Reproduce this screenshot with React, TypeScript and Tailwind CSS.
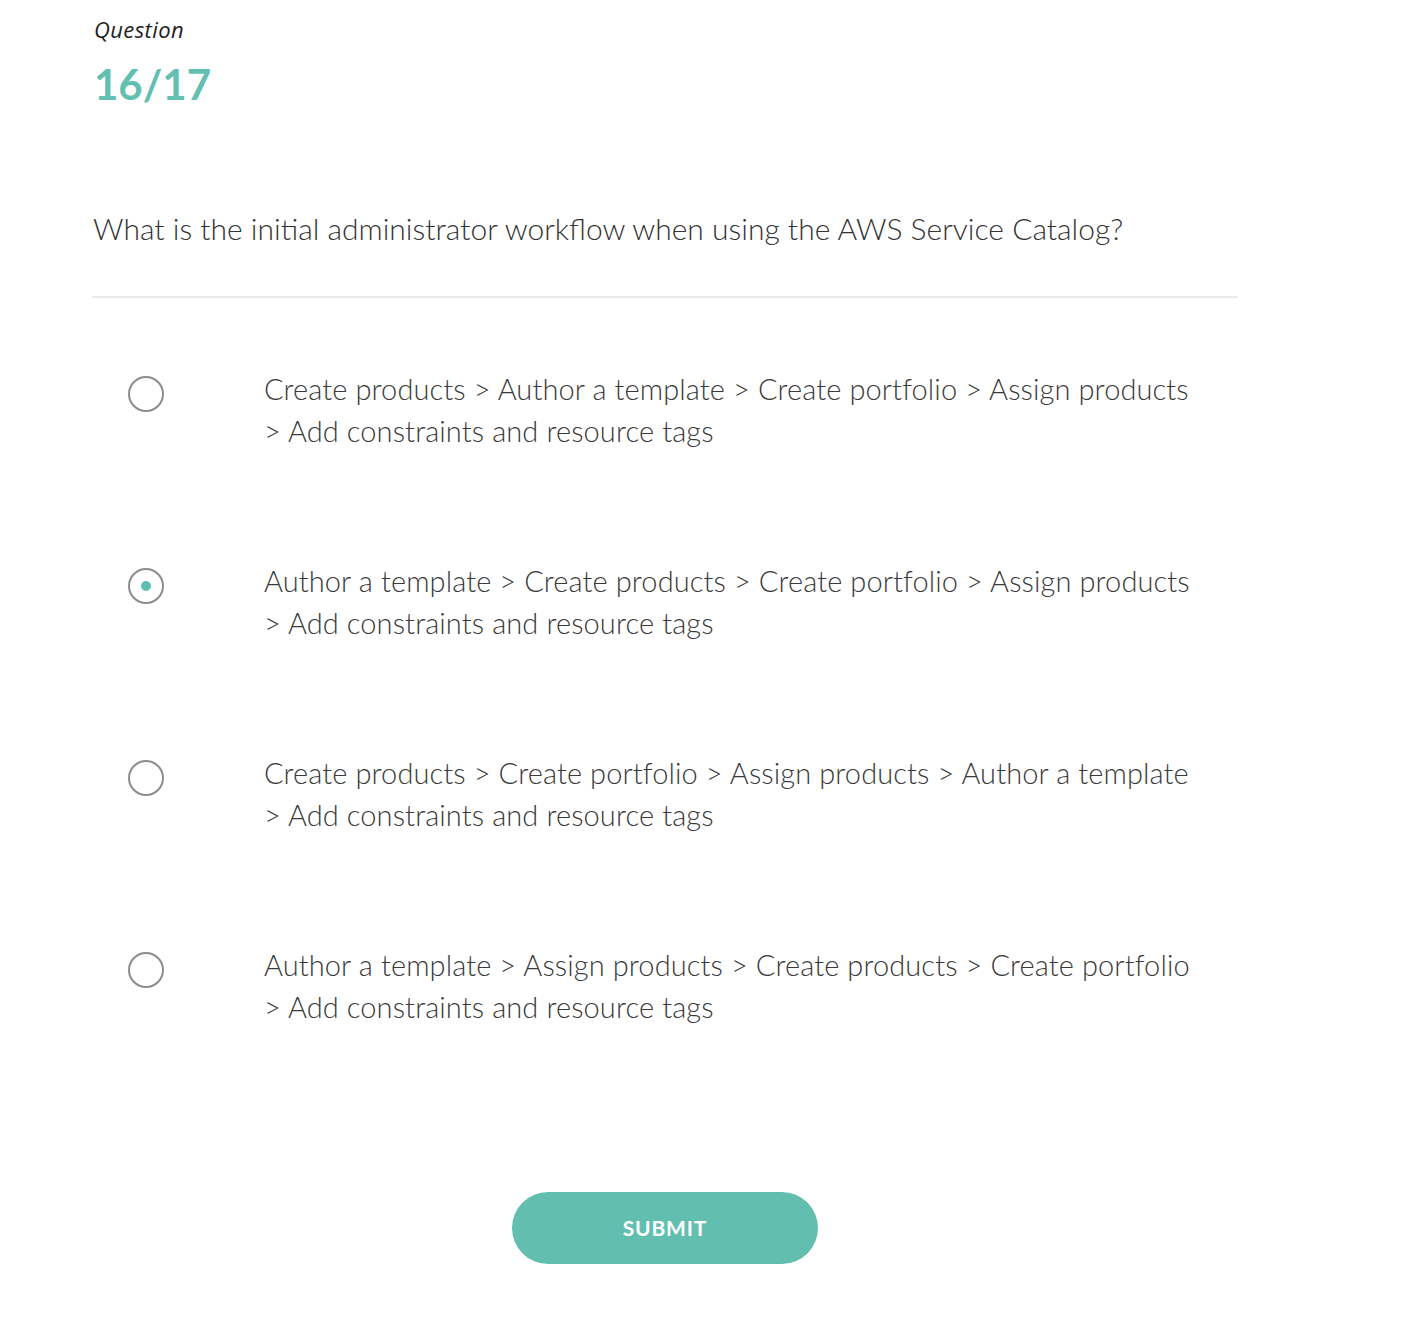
import { useState } from "react";

const options = [
  "Create products > Author a template > Create portfolio > Assign products > Add constraints and resource tags",
  "Author a template > Create products > Create portfolio > Assign products > Add constraints and resource tags",
  "Create products > Create portfolio > Assign products > Author a template > Add constraints and resource tags",
  "Author a template > Assign products > Create products > Create portfolio > Add constraints and resource tags",
];

export default function App() {
  const [selected, setSelected] = useState(1);
  return (
    <div className="min-h-[1326px] bg-white font-['Lato','Open_Sans',sans-serif] text-[#333]">
      <div className="w-[1146px] ml-[92px] pt-[14px]">
        <p className="pl-[2px] font-['Open_Sans',sans-serif] text-[22px] italic leading-[30px] tracking-[0.4px] text-[#222]">Question</p>
        <h1 className="mt-[15px] pl-[2px] text-[42px] font-bold leading-[50px] text-[#63bfb1]">16/17</h1>

        <p className="mt-[99px] pl-[1px] text-[30px] font-light leading-[40px] text-[#333]">
          What is the initial administrator workflow when using the AWS Service Catalog?
        </p>
        <div className="mt-[48px] h-[2px] bg-[#ebebeb]" />

        <div className="mt-[70px] flex flex-col gap-[108px]">
          {options.map((o, i) => (
            <label key={i} className="flex cursor-pointer items-start" onClick={() => setSelected(i)}>
              <span className="ml-[36px] mt-[8px] flex h-[36px] w-[36px] shrink-0 items-center justify-center rounded-full border-2 border-[#8c8c8c]">
                {selected === i && <span className="h-[10px] w-[10px] rounded-full bg-[#5fbfb0]" />}
              </span>
              <span className="ml-[100px] w-[940px] text-[29px] font-light leading-[42px] tracking-[0.1px] text-[#3a3a3a]">{o}</span>
            </label>
          ))}
        </div>

        <div className="mt-[164px] flex justify-center">
          <button className="h-[72px] w-[306px] rounded-full bg-[#62bfb0] text-[21px] font-bold tracking-[0.8px] text-white">
            SUBMIT
          </button>
        </div>
      </div>
    </div>
  );
}
